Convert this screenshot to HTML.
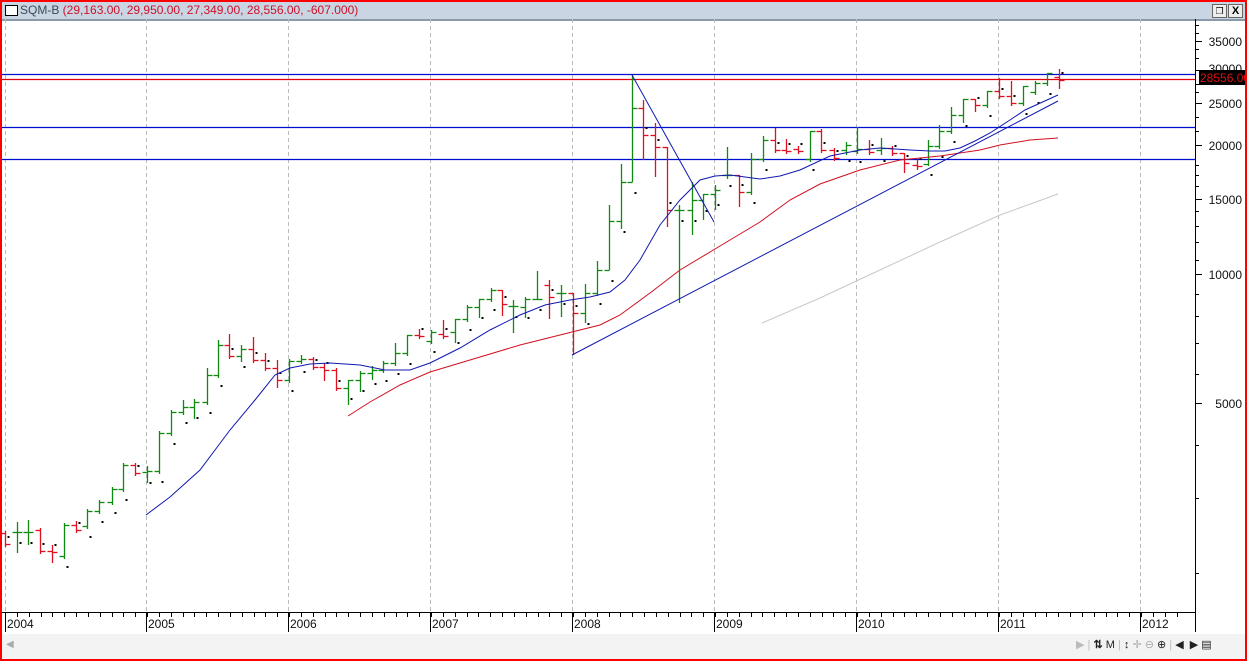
<!DOCTYPE html>
<html><head><meta charset="utf-8"><style>
html,body{margin:0;padding:0;width:1247px;height:661px;overflow:hidden;background:#fff;font-family:"Liberation Sans",sans-serif}
#f{position:absolute;left:0;top:0;width:1243px;height:657px;border:2px solid #f00;}
#tb{position:absolute;left:0;top:0;width:1243px;height:17px;background:#c9d5e2;border-bottom:2px solid #8a9aa8}
#tb .t{position:absolute;left:18px;top:1px;font-size:12px;color:#3a4a5a;white-space:nowrap}
#tb .t span{color:#d0102a}
#bot{position:absolute;left:0;top:632px;width:1243px;height:25px;background:#f3f3f3}
svg{position:absolute;left:0;top:0}
</style></head><body>
<div id="f">
<div id="tb"><div style="position:absolute;left:3px;top:3px;width:11px;height:9px;border:1px solid #000;background:#fff"></div><div class="t">SQM-B <span>(29,163.00, 29,950.00, 27,349.00, 28,556.00, -607.000)</span></div>
<div style="position:absolute;left:1210px;top:2px;width:13px;height:12px;border:1px solid #666;background:#eee;font-size:9px;text-align:center;line-height:12px">&#x2750;</div>
<div style="position:absolute;left:1226px;top:2px;width:13px;height:12px;border:1px solid #666;background:#eee;font-size:11px;font-weight:bold;text-align:center;line-height:12px">X</div></div>
<div id="bot"><span style="position:absolute;left:4px;top:5px;font-size:10px;color:#aaa">&#9664;</span>
<span style="position:absolute;left:1074px;top:4px;font-size:11px;color:#bbb;letter-spacing:0">&#9654; | <b style="color:#222">&#8645;</b> <span style="color:#222">M</span> | <b style="color:#222">&#8597;</b> <span style="color:#aaa">&#10011; &#8854;</span> <span style="color:#222">&#8853;</span> | <span style="color:#222">&#9664; &nbsp;&#9654; &#9636;</span></span></div>
</div>
<svg id="s" width="1247" height="661" xmlns="http://www.w3.org/2000/svg"></svg>
<script>
var s=document.getElementById('s'),h='';
function L(x1,y1,x2,y2,c,w,d){h+='<line x1="'+x1+'" y1="'+y1+'" x2="'+x2+'" y2="'+y2+'" stroke="'+c+'" stroke-width="'+(w||1)+'"'+(d?' stroke-dasharray="'+d+'"':'')+'/>';}
function P(pts,c){h+='<polyline fill="none" stroke="'+c+'" stroke-width="1" points="'+pts+'"/>';}
var yrs=[5,146,288,430,572,714,856,998,1140];
yrs.forEach(function(x,i){L(x+.5,19,x+.5,612,'#bbb',1,'4,3');});
L(2,74.5,1195,74.5,'#0010d0',1.2);L(2,79.5,1195,79.5,'#e00010',1.2);L(2,127.5,1195,127.5,'#0010d0',1.2);L(2,159.5,1195,159.5,'#0010d0',1.2);
L(1195.5,19,1195.5,612,'#000');
var lab=[[41,'35000'],[103,'25000'],[145,'20000'],[199,'15000'],[274,'10000'],[403,'5000']];
lab.forEach(function(a){L(1195,a[0]+.5,1202,a[0]+.5,'#000');h+='<text x="1242" y="'+(a[0]+5)+'" font-size="12" text-anchor="end" fill="#111">'+a[1]+'</text>';});
[25,33,49,58,70,84,92,117,131,165,175,186,211,226,242,260,294,316,343,374,445,498,573].forEach(function(y){L(1195,y+.5,1199,y+.5,'#000');});
h+='<text x="1242" y="73" font-size="12" text-anchor="end" fill="#111">30000</text>';
h+='<rect x="1199" y="70" width="46" height="15" fill="#000"/><text x="1200" y="82" font-size="12" fill="#e01010">28556.00</text>';
h+='<rect x="2" y="612" width="1193" height="20" fill="#fff"/>';
L(2,612.5,1195,612.5,'#000');L(1195.5,612,1195.5,632,'#000');
for(var i=0;i<100;i++){var x=Math.round(5+i*142/12)+.5;if(x>1195)break;L(x,612,x,617,'#000');}
var yl=['2004','2005','2006','2007','2008','2009','2010','2011','2012'];
yrs.forEach(function(x,i){L(x+.5,612,x+.5,632,'#000');h+='<text x="'+(x+2)+'" y="628" font-size="12" fill="#111">'+yl[i]+'</text>';});
var B=[[5,533,544],[17,532,532,522,553],[28,532,532,520,545],[40,530,551],[52,551,552,545,563],[64,556,525],[76,525,530,521,533],[87,526,511],[99,511,502],[112,502,489],[123,489,465],[135,465,473,463],[147,472,471,466,483],
[159,471,433],[171,433,412],[183,412,407,400],[194,407,402,399,419],[207,402,375,368],[218,375,345,340],[229,345,356,334],[241,356,349,345,362],[253,349,360,337],[265,360,368,353],[277,368,380,360,388],
[289,380,361,359,383],[301,361,359,355],[313,359,367],[324,367,370,363,381],[336,370,388],[348,388,380,380,405],[360,380,373,371,392],[372,373,370,366,380],[383,370,363],[395,363,353,343],[407,353,335,335],[419,335,336,329],
[431,341,332],[443,334,336,320],[455,332,319,319,343],[467,319,307],[479,307,299,299,318],[491,299,290],[502,290,304,290,316],[513,306,306,300,333],[525,307,299,297,318],[537,299,299,271,299],[549,285,297,280,319],[561,293,293,285,317],
[573,293,313,293,355],[585,313,293,284,323],[597,293,270,261],[609,270,221,205,270],[621,221,182,164,229],[632,182,108,75,182],[643,108,135,100,160],[655,135,147,123,177],[667,147,210,147,227],[679,210,210,205,303],[692,210,200,182,235],[703,200,194,194,220],
[715,194,190,185,210],[727,175,175,147,179],[739,175,192,175,207],[751,192,159,153],[763,159,140,136],[775,140,150,128],[786,150,151,139],[798,149,151,146,154],[810,159,131,131],[821,131,150],[834,150,158],[846,150,145,142,155],
[857,151,149,127,154],[869,149,152,140,155],[881,150,148,138,155],[892,148,153],[904,153,163,153,173],[917,165,166,160,170],[928,164,146,140,166],[939,146,131,125],[951,131,115,107],[963,115,99,99,123],[975,99,105,99,112],[987,105,91,91],
[999,91,96,78],[1011,96,103,81],[1023,103,86,86],[1035,92,83],[1047,83,73,73,86],[1059,77,80,69,89]];
B.forEach(function(b){var o=b[1],c=b[2],hi=b[3]!==undefined?b[3]:Math.min(o,c)-2,lo=b[4]!==undefined?b[4]:Math.max(o,c)+3;
var col=c>o?'#e01020':'#108a10';var x=b[0]+.5;L(x,hi,x,lo,col,1.3);L(x-5,o+.5,x,o+.5,col,1.3);L(x,c+.5,x+5,c+.5,col,1.3);
var dy=c>o?-8:10;h+='<rect x="'+(x+2)+'" y="'+(Math.max(o,c)+dy)+'" width="2" height="2" fill="#000"/>';});
P('146,515 170,497 200,470 230,430 255,400 275,375 290,368 310,364 330,363 360,365 385,370 410,370 430,363 460,348 490,330 520,315 545,305 570,300 590,297 610,292 625,280 640,260 660,225 680,200 700,180 715,176 730,175 745,177 760,179 780,176 800,170 815,163 830,156 845,153 860,150 880,148 895,149 910,150 930,151 945,151 960,148 975,141 990,133 1010,120 1025,110 1058,95','#1018b0');
P('348,416 370,402 400,385 430,372 470,360 520,345 560,335 600,325 620,315 650,293 680,270 720,246 760,222 790,200 820,184 860,170 900,160 940,156 980,150 1000,145 1030,140 1058,138','#d01020');
P('762,323 820,298 880,270 940,242 1000,215 1058,194','#c8c8c8');
L(572,355,1058,101,'#1018b0');L(632,75,714,222,'#1018b0');
s.innerHTML=h;
</script>
</body></html>
